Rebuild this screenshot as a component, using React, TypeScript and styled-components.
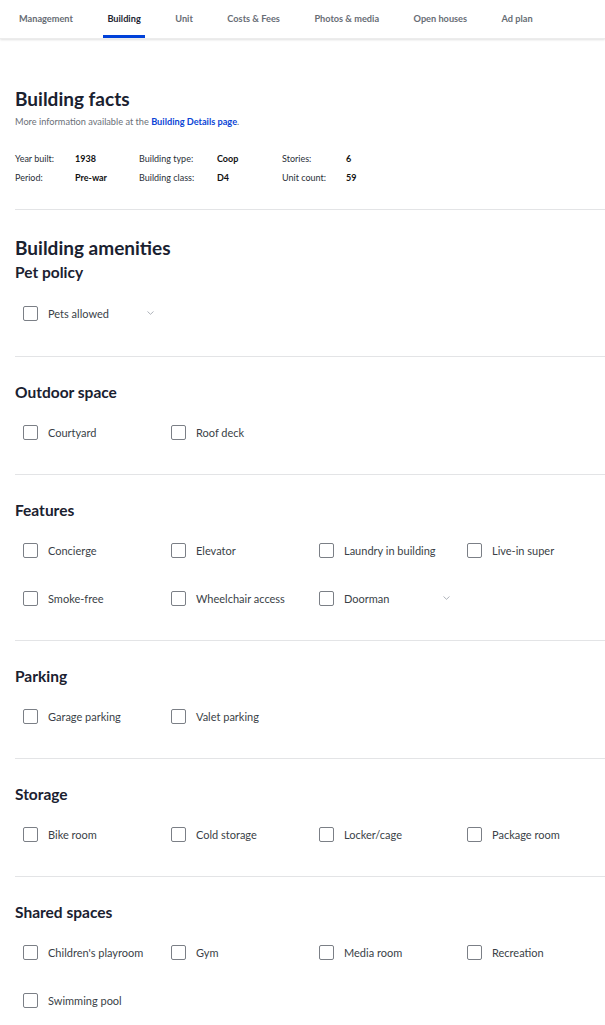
import styled, { createGlobalStyle } from 'styled-components'

const GlobalStyle = createGlobalStyle`
  html, body {
    margin: 0;
    padding: 0;
    background: #fff;
  }
  body {
    font-family: Lato, 'Open Sans', sans-serif;
    color: #1d2533;
  }
`

const tabs = [
  'Management',
  'Building',
  'Unit',
  'Costs & Fees',
  'Photos & media',
  'Open houses',
  'Ad plan',
]

const facts = [
  ['Year built:', '1938', 'Building type:', 'Coop', 'Stories:', '6'],
  ['Period:', 'Pre-war', 'Building class:', 'D4', 'Unit count:', '59'],
]

type Amenity = { label: string; menu?: boolean }

const sections: { title: string; items: Amenity[] }[] = [
  { title: 'Outdoor space', items: [{ label: 'Courtyard' }, { label: 'Roof deck' }] },
  {
    title: 'Features',
    items: [
      { label: 'Concierge' },
      { label: 'Elevator' },
      { label: 'Laundry in building' },
      { label: 'Live-in super' },
      { label: 'Smoke-free' },
      { label: 'Wheelchair access' },
      { label: 'Doorman', menu: true },
    ],
  },
  { title: 'Parking', items: [{ label: 'Garage parking' }, { label: 'Valet parking' }] },
  {
    title: 'Storage',
    items: [
      { label: 'Bike room' },
      { label: 'Cold storage' },
      { label: 'Locker/cage' },
      { label: 'Package room' },
    ],
  },
  {
    title: 'Shared spaces',
    items: [
      { label: "Children's playroom" },
      { label: 'Gym' },
      { label: 'Media room' },
      { label: 'Recreation' },
      { label: 'Swimming pool' },
    ],
  },
]

const Chevron = () => (
  <svg width="7" height="4" viewBox="0 0 7 4" fill="none">
    <path d="M0.5 0.5 L3.5 3.3 L6.5 0.5" stroke="#9aa0a8" strokeWidth="0.8" />
  </svg>
)

const AmenityGrid = ({ items, $offset }: { items: Amenity[]; $offset?: number }) => (
  <Grid $offset={$offset}>
    {items.map(item => (
      <Item key={item.label}>
        <Box />
        <ItemLabel>{item.label}</ItemLabel>
        {item.menu && (
          <Menu>
            <Chevron />
          </Menu>
        )}
      </Item>
    ))}
  </Grid>
)

export default function App() {
  return (
    <>
      <GlobalStyle />
      <NavBar>
        {tabs.map(t => (
          <Tab key={t} $active={t === 'Building'}>
            {t}
          </Tab>
        ))}
      </NavBar>
      <Page>
        <FactsBlock>
          <Title>Building facts</Title>
          <Note>
            More information available at the <Link>Building Details page</Link>.
          </Note>
          <FactsGrid>
            {facts.flat().map((v, i) =>
              i % 2 === 0 ? (
                <FactLabel key={i}>{v}</FactLabel>
              ) : (
                <FactValue key={i}>{v}</FactValue>
              )
            )}
          </FactsGrid>
        </FactsBlock>
        <AmenitiesHead>
          <Title>Building amenities</Title>
          <SectionTitle $tight>Pet policy</SectionTitle>
          <AmenityGrid items={[{ label: 'Pets allowed', menu: true }]} $offset={7} />
        </AmenitiesHead>
        {sections.map(s => (
          <Section key={s.title}>
            <SectionTitle>{s.title}</SectionTitle>
            <AmenityGrid items={s.items} />
          </Section>
        ))}
      </Page>
    </>
  )
}

const NavBar = styled.nav`
  display: flex;
  align-items: stretch;
  height: 39px;
  padding-left: 15px;
  gap: 26.5px;
  box-shadow: 0 1px 2px rgba(0, 0, 0, 0.12);
  border-bottom: 1px solid #ececec;
  box-sizing: border-box;
`

const Tab = styled.div<{ $active?: boolean }>`
  display: flex;
  align-items: center;
  padding: 1px 4px 0;
  font-size: 9.2px;
  font-weight: 700;
  color: ${({ $active }) => ($active ? '#1d2533' : '#686d75')};
  border-bottom: 3px solid ${({ $active }) => ($active ? '#0041d9' : 'transparent')};
`

const Page = styled.main`
  padding-left: 15px;
`

const Block = styled.section`
  border-bottom: 1px solid #e3e4e6;
`

const FactsBlock = styled(Block)`
  padding: 49px 0 22px;
`

const AmenitiesHead = styled(Block)`
  padding: 27px 0 19px;
`

const Section = styled(Block)`
  padding: 25px 0 18px;
`

const Title = styled.h2`
  margin: 0;
  font-size: 19px;
  line-height: 22px;
  font-weight: 700;
  color: #1a2130;
`

const Note = styled.p`
  margin: 5px 0 0;
  font-size: 9.2px;
  line-height: 13px;
  color: #6b7078;
`

const Link = styled.a`
  color: #0b45d6;
  font-weight: 700;
`

const FactsGrid = styled.div`
  display: grid;
  grid-template-columns: 60px 64px 78px 65px 64px auto;
  grid-auto-rows: 19px;
  align-items: center;
  margin-top: 21px;
  font-size: 9px;
`

const FactLabel = styled.span`
  color: #2a2f38;
`

const FactValue = styled.span`
  color: #111;
  font-weight: 700;
`

const SectionTitle = styled.h3<{ $tight?: boolean }>`
  margin: ${({ $tight }) => ($tight ? '3px 0 0' : '0')};
  font-size: 15.5px;
  line-height: 20px;
  font-weight: 700;
  color: #1a2130;
`

const Grid = styled.div<{ $offset?: number }>`
  display: grid;
  grid-template-columns: repeat(4, 148px);
  grid-auto-rows: 48px;
  padding-left: 8px;
  margin-top: ${({ $offset }) => $offset ?? 6}px;
`

const Item = styled.label`
  display: flex;
  align-items: center;
  width: 131px;
`

const Box = styled.span`
  flex: none;
  width: 13px;
  height: 13px;
  border: 1px solid #7b7f86;
  border-radius: 2px;
  margin-right: 10px;
`

const ItemLabel = styled.span`
  font-size: 11px;
  color: #3a3f47;
`

const Menu = styled.span`
  display: flex;
  margin-left: auto;
`
